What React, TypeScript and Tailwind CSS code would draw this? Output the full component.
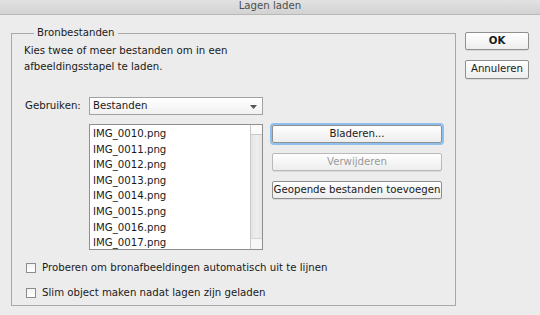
const files = [
  "IMG_0010.png",
  "IMG_0011.png",
  "IMG_0012.png",
  "IMG_0013.png",
  "IMG_0014.png",
  "IMG_0015.png",
  "IMG_0016.png",
  "IMG_0017.png",
];

const font = { fontFamily: '"DejaVu Sans", Verdana, sans-serif' };

function Button({
  label,
  className,
  disabled,
  focused,
}: {
  label: string;
  className?: string;
  disabled?: boolean;
  focused?: boolean;
}) {
  return (
    <div
      className={`flex items-center justify-center whitespace-nowrap rounded-[2px] border bg-gradient-to-b from-white to-[#ededed] text-[10.2px] leading-none ${
        disabled ? "border-[#b9b9b9] text-[#9a9a9a]" : "border-[#8f8f8f] text-[#1a1a1a]"
      } ${focused ? "shadow-[0_0_0_2px_#8dc0ec]" : "shadow-[0_1px_0_rgba(0,0,0,0.08)]"} ${className ?? ""}`}
    >
      {label}
    </div>
  );
}

function Checkbox({ label }: { label: string }) {
  return (
    <div className="flex h-[25px] items-center">
      <div className="ml-[14px] h-[10px] w-[10px] border border-[#8c8c8c] bg-gradient-to-b from-[#f4f4f4] to-white" />
      <span className="ml-[6px] text-[10.2px] text-[#1a1a1a]">{label}</span>
    </div>
  );
}

export default function App() {
  return (
    <div className="h-[315px] w-[540px] overflow-hidden bg-[#ececec]" style={font}>
      {/* title bar */}
      <div className="flex h-[15px] items-start justify-center border-b border-[#b8b8b8] bg-gradient-to-b from-[#e2e2e2] to-[#d2d2d2]">
        <span className="-mt-[2px] text-[10.2px] leading-[15px] text-[#4d4d4d]">Lagen laden</span>
      </div>

      <div className="flex">
        {/* group */}
        <fieldset className="ml-[11px] mt-[11px] h-[280px] w-[445px] border border-[#a9a9a9] pl-[12px]">
          <legend className="ml-[10px] px-[3px] text-[10.2px] leading-[14px] text-[#1a1a1a]">Bronbestanden</legend>
          <p className="mt-[3px] text-[10.2px] leading-[15.5px] text-[#1a1a1a]">
            Kies twee of meer bestanden om in een
            <br />
            afbeeldingsstapel te laden.
          </p>

          <div className="mt-[23px] flex items-center">
            <span className="ml-[1px] w-[64px] text-[10.2px] text-[#1a1a1a]">Gebruiken:</span>
            <div className="relative flex h-[18px] w-[174px] items-center border border-[#a2a2a2] bg-gradient-to-b from-white to-[#f1f1f1] pl-[3px] text-[10.2px] text-[#1a1a1a]">
              Bestanden
              <svg className="absolute right-[5px] top-[7px]" width="7" height="4" viewBox="0 0 7 4">
                <path d="M0 0h7L3.5 4z" fill="#555" />
              </svg>
            </div>
          </div>

          <div className="mt-[9px] flex">
            <div className="ml-[65px] flex h-[126px] w-[174px] border border-[#8e8e8e] bg-white">
              <div className="flex-1 overflow-hidden pl-[3px] pt-[1px]">
                {files.map((f) => (
                  <div key={f} className="text-[10.2px] leading-[15.6px] text-[#1a1a1a]">
                    {f}
                  </div>
                ))}
              </div>
              <div className="flex w-[12px] flex-col border-l border-[#c8c8c8] bg-gradient-to-r from-[#e4e4e4] via-[#eeeeee] to-[#e6e6e6]">
                <div className="h-[10px] border-b border-[#c8c8c8] bg-[#fafafa]" />
                <div className="flex-1" />
                <div className="h-[11px] border-t border-[#d6d6d6] bg-[#f6f6f6]" />
              </div>
            </div>

            <div className="ml-[9px] flex w-[170px] flex-col gap-[10px] pt-[1px]">
              <Button label="Bladeren..." className="h-[18px]" focused />
              <Button label="Verwijderen" className="h-[18px]" disabled />
              <Button label="Geopende bestanden toevoegen" className="h-[18px]" />
            </div>
          </div>

          <div className="mt-[5px] -ml-[12px]">
            <Checkbox label="Proberen om bronafbeeldingen automatisch uit te lijnen" />
            <Checkbox label="Slim object maken nadat lagen zijn geladen" />
          </div>
        </fieldset>

        {/* dialog buttons */}
        <div className="ml-[9px] mt-[17px] flex w-[64px] flex-col gap-[10px]">
          <Button label="OK" className="h-[18px] font-bold" />
          <Button label="Annuleren" className="h-[19px]" />
        </div>
      </div>
    </div>
  );
}
